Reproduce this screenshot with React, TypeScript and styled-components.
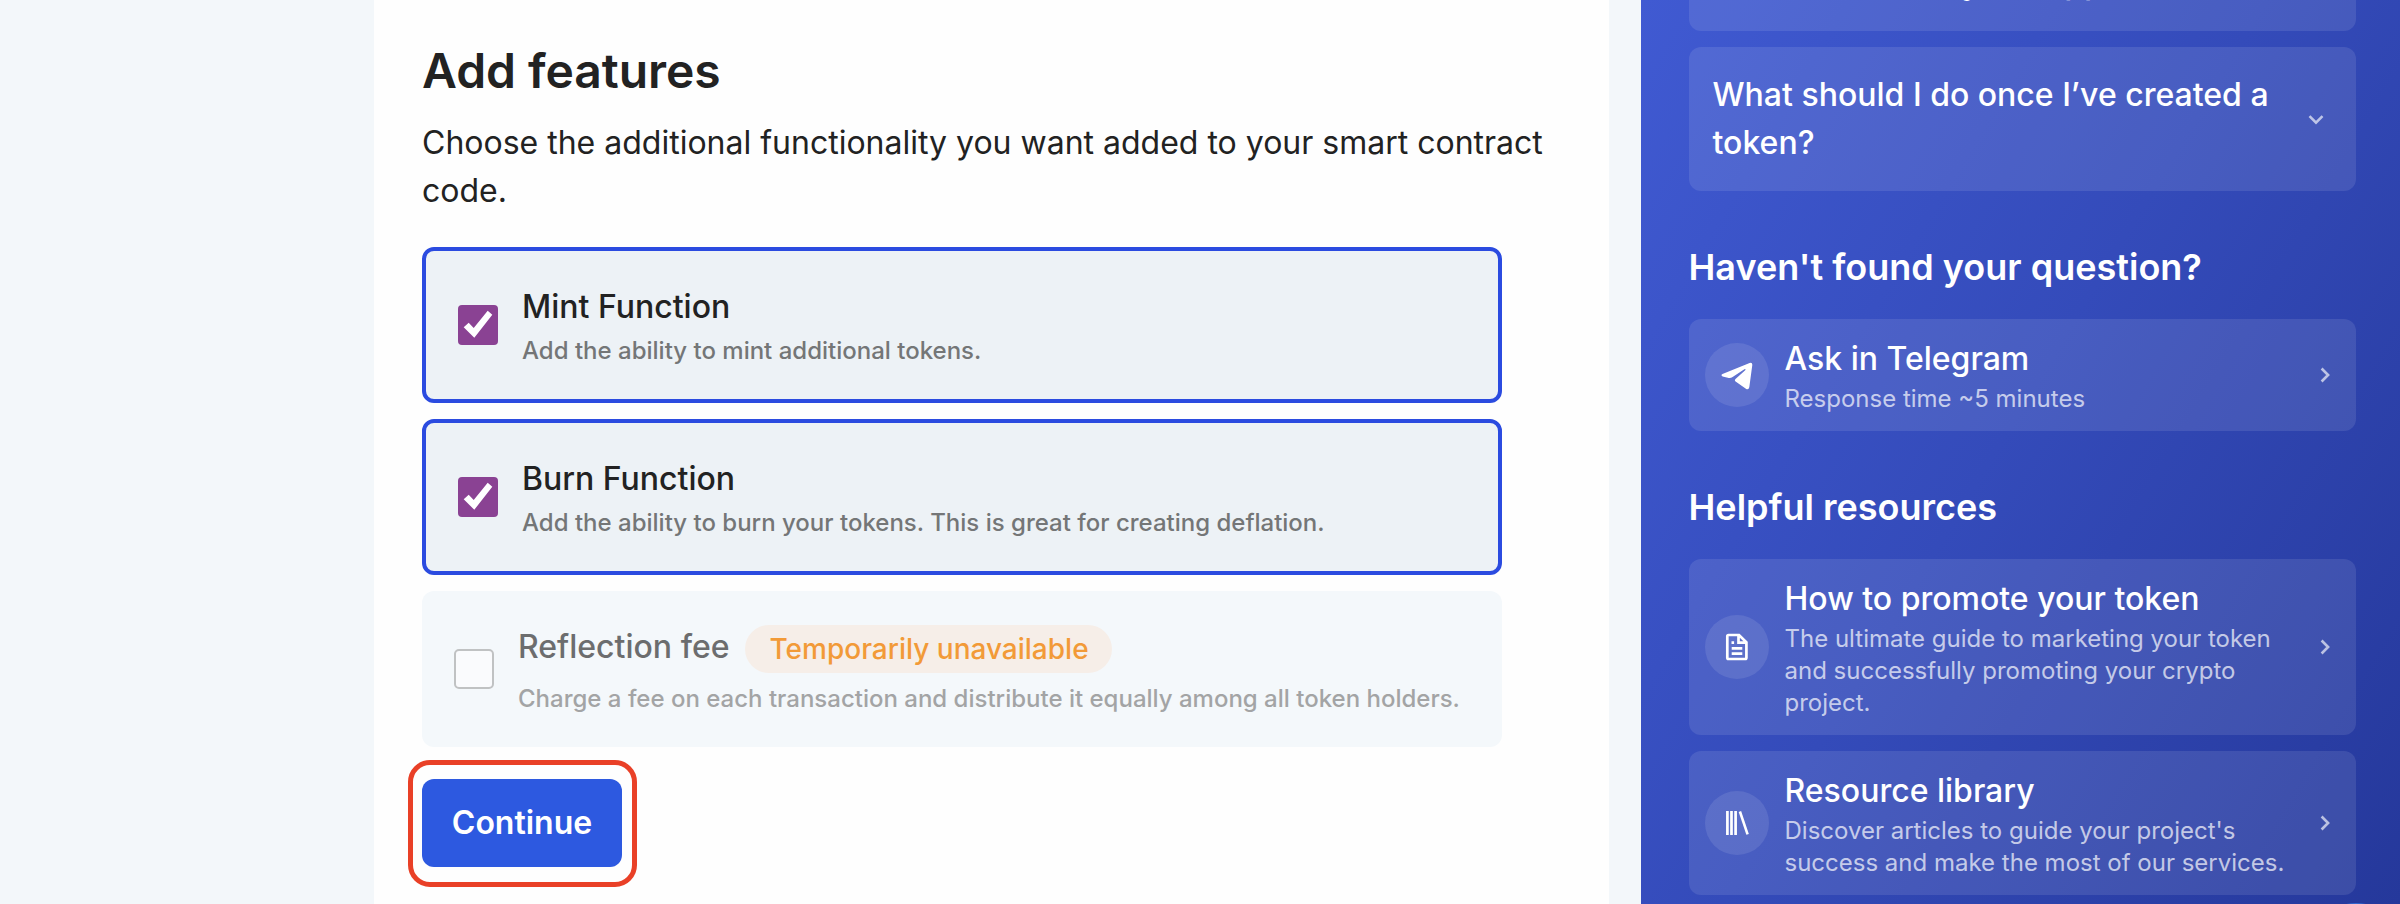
import React from "react";
import styled, { createGlobalStyle } from "styled-components";

const GlobalStyle = createGlobalStyle`
  *, *::before, *::after { box-sizing: border-box; }
  html, body { margin: 0; padding: 0; }
  body { font-family: Inter, "Liberation Sans", sans-serif; background: #f3f7fa; color: #222; overflow: hidden; }
  h1, h2, h3, p { margin: 0; }
`;

const Page = styled.div`
  position: relative;
  display: flex;
  width: 2400px;
  height: 904px;
  overflow: hidden;
  background: #f3f7fa;
`;

const Main = styled.main`
  width: 1235px;
  margin-left: 374px;
  margin-right: 32px;
  flex: none;
  background: #fefefe;
  padding: 40px 48px 0 48px;
`;

const Title = styled.h1`
  font-size: 48px;
  line-height: 62px;
  font-weight: 600;
  letter-spacing: -0.05px;
`;

const Intro = styled.p`
  margin-top: 17px;
  font-size: 32px;
  line-height: 48px;
`;

const Features = styled.div`
  display: flex;
  flex-direction: column;
  gap: 16px;
  width: 1080px;
  margin-top: 32px;
`;

const Feature = styled.label<{ $checked?: boolean; $disabled?: boolean }>`
  display: flex;
  align-items: center;
  gap: 24px;
  height: 156px;
  padding: 0 32px;
  border-radius: 12px;
  border: ${(p) => (p.$checked ? "4px solid #2b4be0" : "none")};
  background: ${(p) => (p.$disabled ? "#f4f8fb" : "#edf2f6")};
  color: ${(p) => (p.$disabled ? "#6c6d6e" : "#222")};
`;

const Check = styled.span<{ $on?: boolean }>`
  display: block;
  flex: none;
  width: 40px;
  height: 40px;
  border-radius: ${(p) => (p.$on ? "4px" : "5px")};
  border: ${(p) => (p.$on ? "none" : "2px solid #c0c2c3")};
  background: ${(p) => (p.$on ? "#8a4293" : "#fafbfd")};
  svg { display: block; }
`;

const FeatureText = styled.div`
  display: flex;
  flex-direction: column;
  padding-top: 4px;
`;

const FeatureName = styled.div`
  display: flex;
  align-items: center;
  gap: 15px;
  font-size: 32px;
  line-height: 48px;
  font-weight: 500;
`;

const FeatureNote = styled.div<{ $disabled?: boolean }>`
  margin: ${(p) => (p.$disabled ? "6px 0 2px" : "0")};
  font-size: 24px;
  line-height: ${(p) => (p.$disabled ? "36px" : "40px")};
  font-weight: 500;
  color: ${(p) => (p.$disabled ? "#a3a4a5" : "#747677")};
`;

const NameLabel = styled.span`
  height: 52px;
`;

const Badge = styled.span`
  height: 48px;
  padding: 0 23px 0 25px;
  border-radius: 24px;
  background: #f6eee8;
  color: #f29a38;
  font-size: 28px;
`;

const Highlight = styled.div`
  display: inline-flex;
  margin: 13px 0 0 -14px;
  padding: 14px 10px 15px 9px;
  border: 5px solid #e94027;
  border-radius: 22px;
`;

const Button = styled.button`
  width: 200px;
  height: 88px;
  padding: 0;
  border: 0;
  border-radius: 12px;
  background: #2d59e0;
  color: #fff;
  font: 600 32px/48px Inter, sans-serif;
`;

const Sidebar = styled.aside`
  width: 759px;
  flex: none;
  padding: 0 44px 0 48px;
  background: linear-gradient(121deg, #405ad2 0%, #344bba 48%, #25389b 100%);
  color: #fff;
`;

const Stack = styled.div`
  display: flex;
  flex-direction: column;
  gap: 16px;
`;

const Question = styled.div<{ $scrolled?: boolean }>`
  display: flex;
  align-items: center;
  justify-content: space-between;
  height: 144px;
  margin-top: ${(p) => (p.$scrolled ? "-113px" : "0")};
  padding: 0 28px 0 23.5px;
  border-radius: 12px;
  background: rgba(255, 255, 255, 0.1);
  font-size: 32px;
  line-height: 48px;
  font-weight: 500;
`;

const QuestionText = styled.div`
  width: 570px;
`;

const Heading = styled.h2`
  margin: 56px 0 32px -0.5px;
  font-size: 36px;
  line-height: 40px;
  font-weight: 600;
`;

const LinkCard = styled.a`
  display: flex;
  align-items: center;
  padding: 16px 21px 16px 16px;
  border-radius: 12px;
  background: rgba(255, 255, 255, 0.1);
`;

const IconCircle = styled.span`
  display: flex;
  align-items: center;
  justify-content: center;
  flex: none;
  width: 64px;
  height: 64px;
  margin-right: 15.5px;
  border-radius: 50%;
  background: rgba(255, 255, 255, 0.1);
`;

const LinkText = styled.div`
  flex: 1;
`;

const LinkTitle = styled.div`
  font-size: 32px;
  line-height: 48px;
  font-weight: 500;
`;

const LinkNote = styled.div`
  width: 505px;
  font-size: 24px;
  line-height: 32px;
  color: rgba(255, 255, 255, 0.7);
`;

const ChatBubble = styled.div`
  position: absolute;
  top: 902.6px;
  left: 2308px;
  width: 96px;
  height: 96px;
  border-radius: 50%;
  background: #3468cf;
`;

const Tick = () => (
  <svg width="40" height="40" viewBox="0 0 40 40">
    <path d="M5.7 22.3 L10.7 17.7 L15.7 23 L29.7 5.7 L34.3 9.7 L16.3 32.7Z" fill="#fff" />
  </svg>
);

const ChevronRight = () => (
  <svg width="20" height="20" viewBox="0 0 20 20" fill="none">
    <path d="M6.6 3.5 L13.1 10 L6.6 16.5" stroke="#fff" strokeOpacity=".65" strokeWidth="2.6" />
  </svg>
);

const ChevronDown = () => (
  <svg width="24" height="24" viewBox="0 0 24 24" fill="none">
    <path d="M5.5 9.2 L12 15.7 L18.5 9.2" stroke="#fff" strokeOpacity=".65" strokeWidth="2.6" />
  </svg>
);

const TelegramIcon = () => (
  <svg width="32" height="32" viewBox="0 0 32 32" fill="#fff">
    <path d="M1.5 15 L28.6 3.9 Q31.5 3.1 31.3 6 L28.3 28.3 Q27.6 31.2 24.9 29.7 L14.6 22.5 Q13.2 21.2 14.5 19.9 L24.2 11.2 Q25.2 9.7 23.4 10.2 L11.6 18.1 Q9.4 19.5 6.8 18.8 L1.6 17.4 Q-.6 16.2 1.5 15Z" />
  </svg>
);

const DocumentIcon = () => (
  <svg width="32" height="32" viewBox="0 0 32 32" fill="none" stroke="#fff" strokeWidth="2.7">
    <path d="M7.5 4 H18 L25.4 11.4 V26.8 Q25.4 28 24.2 28 H7.5 Q6.3 28 6.3 26.8 V5.2 Q6.3 4 7.5 4Z M17.5 4 V11.6 H25 M10.5 11.6 H13.1 M10.7 17.3 H21.3 M10.7 22.7 H21.3" />
  </svg>
);

const LibraryIcon = () => (
  <svg width="32" height="32" viewBox="0 0 32 32" fill="none" stroke="#fff">
    <path d="M6.4 4 V28 M10.5 4 V28 M14.6 4 V28" strokeWidth="2.7" />
    <path d="M18.9 4.5 L26.6 27.3" strokeWidth="2.6" />
  </svg>
);

type LinkProps = { icon: React.ReactNode; title: string; note: string };

const HelpLink = ({ icon, title, note }: LinkProps) => (
  <LinkCard>
    <IconCircle>{icon}</IconCircle>
    <LinkText>
      <LinkTitle>{title}</LinkTitle>
      <LinkNote>{note}</LinkNote>
    </LinkText>
    <ChevronRight />
  </LinkCard>
);

export default function App() {
  return (
    <>
      <GlobalStyle />
      <Page>
        <Main>
          <Title>Add features</Title>
          <Intro>Choose the additional functionality you want added to your smart contract code.</Intro>
          <Features>
            <Feature $checked>
              <Check $on><Tick /></Check>
              <FeatureText>
                <FeatureName>Mint Function</FeatureName>
                <FeatureNote>Add the ability to mint additional tokens.</FeatureNote>
              </FeatureText>
            </Feature>
            <Feature $checked>
              <Check $on><Tick /></Check>
              <FeatureText>
                <FeatureName>Burn Function</FeatureName>
                <FeatureNote>Add the ability to burn your tokens. This is great for creating deflation.</FeatureNote>
              </FeatureText>
            </Feature>
            <Feature $disabled>
              <Check />
              <FeatureText>
                <FeatureName><NameLabel>Reflection fee</NameLabel> <Badge>Temporarily unavailable</Badge></FeatureName>
                <FeatureNote $disabled>Charge a fee on each transaction and distribute it equally among all token holders.</FeatureNote>
              </FeatureText>
            </Feature>
          </Features>
          <Highlight><Button>Continue</Button></Highlight>
        </Main>
        <Sidebar>
          <Stack>
            <Question $scrolled>
              <QuestionText>How does the contract work?<br />Is it all created by the app?</QuestionText>
            </Question>
            <Question>
              <QuestionText>What should I do once I’ve created a token?</QuestionText>
              <ChevronDown />
            </Question>
          </Stack>
          <Heading>Haven't found your question?</Heading>
          <HelpLink icon={<TelegramIcon />} title="Ask in Telegram" note="Response time ~5 minutes" />
          <Heading>Helpful resources</Heading>
          <Stack>
            <HelpLink icon={<DocumentIcon />} title="How to promote your token" note="The ultimate guide to marketing your token and successfully promoting your crypto project." />
            <HelpLink icon={<LibraryIcon />} title="Resource library" note="Discover articles to guide your project's success and make the most of our services." />
          </Stack>
        </Sidebar>
        <ChatBubble />
      </Page>
    </>
  );
}
